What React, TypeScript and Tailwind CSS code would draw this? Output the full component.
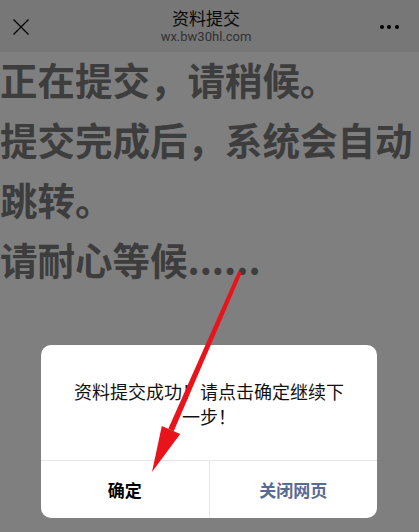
const font = { fontFamily: '"Noto Sans CJK SC", "Noto Sans", sans-serif' };

const Header = () => (
  <div className="flex h-[52px] items-center justify-between bg-[#efefef] pl-[13px] pr-[20px]">
    <svg width="16" height="16" viewBox="0 0 16 16" className="mt-[2px]">
      <path d="M0.5 0.5 L15.5 15.5 M15.5 0.5 L0.5 15.5" stroke="#000" strokeWidth="1.3" fill="none" />
    </svg>
    <div className="flex flex-col items-center">
      <div className="text-[17px] leading-[22px] text-[#111]">资料提交</div>
      <div className="text-[13px] leading-[16px] text-[#666]" style={{ fontFamily: "Roboto, sans-serif" }}>
        wx.bw30hl.com
      </div>
    </div>
    <div className="flex w-[16px] items-center justify-end gap-[3.5px] pt-[2px]">
      <span className="h-[4px] w-[4px] shrink-0 rounded-full bg-black" />
      <span className="h-[4px] w-[4px] shrink-0 rounded-full bg-black" />
      <span className="h-[4px] w-[4px] shrink-0 rounded-full bg-black" />
    </div>
  </div>
);

const Arrow = () => (
  <svg className="pointer-events-none absolute inset-0" width="419" height="532" viewBox="0 0 419 532">
    <polygon points="241.8,272.8 238.2,271.2 168.3,428.8 173.7,431.2" fill="#e8131b" />
    <polygon points="161.8,426 180.2,434 152,472" fill="#e8131b" />
  </svg>
);

const App = () => {
  return (
    <div className="relative h-[532px] w-[419px] overflow-hidden bg-white" style={font}>
      <Header />
      <div className="-mt-[3px] text-[37.5px] font-bold leading-[60px] text-[#7a7a7a]">
        <p>正在提交，请稍候。</p>
        <p>提交完成后，系统会自动跳转。</p>
        <p>请耐心等候......</p>
      </div>

      <div className="absolute inset-0 bg-black/50" />

      <div className="absolute left-[41px] top-[345px] w-[336px] overflow-hidden rounded-[10px] bg-white">
        <div className="flex h-[115px] items-center justify-center px-[32px] pt-[3px] text-center text-[18px] leading-[25px] text-[#111]">
          资料提交成功！请点击确定继续下一步！
        </div>
        <div className="flex h-[58px] border-t border-[#e6e6e6]">
          <button className="flex flex-1 items-center justify-center text-[17px] font-bold text-black">确定</button>
          <div className="w-px bg-[#e6e6e6]" />
          <button className="flex flex-1 items-center justify-center text-[17px] font-bold text-[#576b95]">关闭网页</button>
        </div>
      </div>

      <Arrow />
    </div>
  );
};

export default App;
